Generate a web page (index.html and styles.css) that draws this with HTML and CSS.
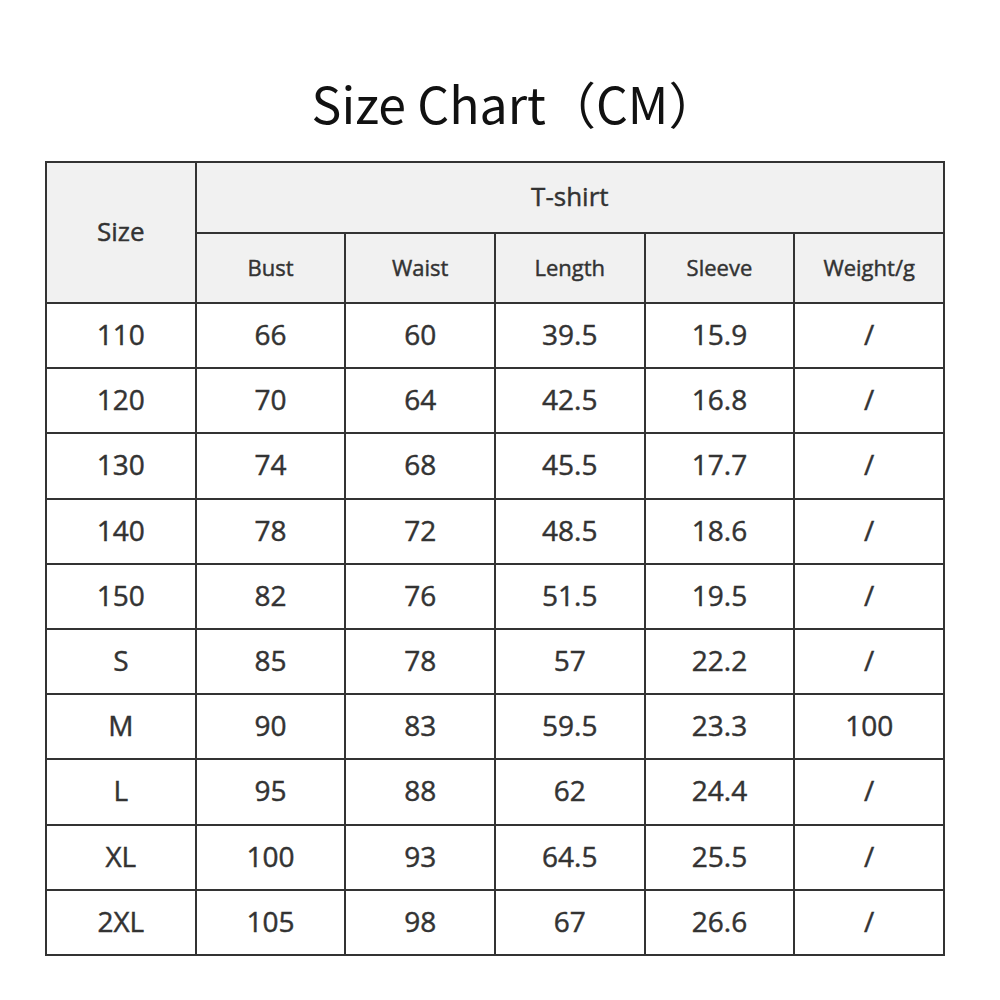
FILE: index.html
```html
<!DOCTYPE html>
<html>
<head>
<meta charset="utf-8">
<link rel="stylesheet" href="styles.css">
</head>
<body>
<div class="page">
  <h1 class="title">Size Chart（CM）</h1>
  <table class="chart">
    <colgroup>
      <col><col><col><col><col><col>
    </colgroup>
    <thead>
      <tr class="h1row">
        <th rowspan="2" class="size-head">Size</th>
        <th colspan="5" class="group-head">T-shirt</th>
      </tr>
      <tr class="h2row">
        <th>Bust</th><th>Waist</th><th>Length</th><th>Sleeve</th><th>Weight/g</th>
      </tr>
    </thead>
    <tbody>
      <tr><td>110</td><td>66</td><td>60</td><td>39.5</td><td>15.9</td><td>/</td></tr>
      <tr><td>120</td><td>70</td><td>64</td><td>42.5</td><td>16.8</td><td>/</td></tr>
      <tr><td>130</td><td>74</td><td>68</td><td>45.5</td><td>17.7</td><td>/</td></tr>
      <tr><td>140</td><td>78</td><td>72</td><td>48.5</td><td>18.6</td><td>/</td></tr>
      <tr><td>150</td><td>82</td><td>76</td><td>51.5</td><td>19.5</td><td>/</td></tr>
      <tr><td>S</td><td>85</td><td>78</td><td>57</td><td>22.2</td><td>/</td></tr>
      <tr><td>M</td><td>90</td><td>83</td><td>59.5</td><td>23.3</td><td>100</td></tr>
      <tr><td>L</td><td>95</td><td>88</td><td>62</td><td>24.4</td><td>/</td></tr>
      <tr><td>XL</td><td>100</td><td>93</td><td>64.5</td><td>25.5</td><td>/</td></tr>
      <tr><td>2XL</td><td>105</td><td>98</td><td>67</td><td>26.6</td><td>/</td></tr>
    </tbody>
  </table>
</div>
</body>
</html>
```

FILE: styles.css
```css
html, body {
  margin: 0;
  padding: 0;
  background: #ffffff;
}
.page {
  width: 1000px;
  height: 1000px;
  padding-top: 69px;
  box-sizing: border-box;
}
.title {
  margin: 0;
  padding-left: 30px;
  height: 66px;
  line-height: 66px;
  text-align: center;
  font-family: "Noto Sans CJK SC", "Noto Sans", sans-serif;
  font-weight: 400;
  font-size: 50px;
  color: #111111;
}
.chart {
  margin: 26px 0 0 45px;
  width: 900px;
  border-collapse: collapse;
  table-layout: fixed;
  font-family: "Open Sans", "Noto Sans", sans-serif;
  color: #333333;
  -webkit-text-stroke: 0.45px #333333;
}
.chart th, .chart td {
  border: 2px solid #333333;
  text-align: center;
  padding: 0 0 3px 0;
}
.chart th {
  background: #f1f1f1;
  font-weight: 400;
}
.h1row th {
  height: 66px;
}
.size-head {
  font-size: 26px;
}
.group-head {
  font-size: 26px;
}
.h2row th {
  height: 65px;
  font-size: 22px;
}
.chart td {
  height: 60.2px;
  font-size: 28px;
  font-weight: 400;
}
```
